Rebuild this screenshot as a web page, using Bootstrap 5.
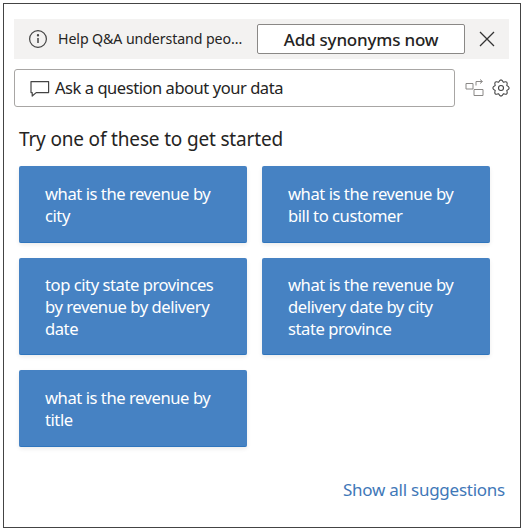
<!DOCTYPE html>
<html lang="en"><head><meta charset="utf-8"><title>Q&amp;A</title>
<link rel="stylesheet" href="https://cdn.jsdelivr.net/npm/bootstrap@5.3.0/dist/css/bootstrap.min.css">
<style>
html,body{height:100%}
body{background:#fff;font-family:"Noto Sans","Open Sans",sans-serif;color:#252423;padding:3px 1px 4px 3px}
.qa-frame{height:525px;border:1px solid #444;padding:15px 10px 0 10px}
.qa-banner{height:40px;background:#f3f2f1;padding:0 0 0 14px;margin-right:1px}
.qa-banner-text{font-size:14.2px;width:199px;margin-left:10px;white-space:nowrap;letter-spacing:-.1px}
.qa-add{width:208px;height:30px;border:1px solid #8a8886;border-radius:2px;background:#fff;font-size:17px;font-weight:500;padding:0;color:#252423;letter-spacing:-.2px;line-height:1}
.qa-x{width:44px}
.qa-row{margin-top:10px}
.qa-input{width:441px;height:38px;border:1px solid #a8a6a4;border-radius:3px;padding-left:15px;font-size:16.5px;letter-spacing:-.45px;gap:5px}
.qa-tools{gap:7px;margin-left:10px}
.qa-title{font-size:19px;margin:19px 0 14px 5px;line-height:26px;letter-spacing:-.17px}
.qa-grid{display:grid;grid-template-columns:228px 228px;column-gap:15px;row-gap:15px;margin-left:5px}
.qa-tile{background:#4682c3;border:0;border-bottom:1px solid #2f75bd;border-radius:2px;color:#fff;padding:17px 20px 0 26px;font-size:16.6px;line-height:22px;box-shadow:0 2px 4px rgba(0,0,0,.08);letter-spacing:-.45px}
.qa-h77{height:77px}.qa-h97{height:97px;padding-top:16px}
.qa-link{color:#3f78b8;font-size:17px;text-decoration:none;letter-spacing:-.25px}
.qa-foot{margin-top:30px;padding-right:5px}
</style></head><body>
<div class="qa-frame">
  <div class="qa-banner d-flex align-items-center">
    <svg width="20" height="20" viewBox="0 0 20 20" fill="none" stroke="#444" stroke-width="1.2"><circle cx="10" cy="10" r="8.4"/><path d="M10 9v5" stroke-width="1.5"/><circle cx="10" cy="6.3" r=".6" fill="#444"/></svg>
    <span class="qa-banner-text">Help Q&amp;A understand peo...</span>
    <button class="qa-add" type="button">Add synonyms now</button>
    <span class="qa-x d-flex justify-content-center"><svg width="16" height="16" viewBox="0 0 16 16" fill="none" stroke="#333" stroke-width="1.3"><path d="M1 1l14 14M15 1L1 15"/></svg></span>
  </div>
  <div class="qa-row d-flex align-items-center">
    <div class="qa-input d-flex align-items-center">
      <svg width="20" height="19" viewBox="0 0 20 19" fill="none" stroke="#444" stroke-width="1.2"><path d="M1 2.6h17.6v11H6.2L2.200 17v-3.400H1z" stroke-linejoin="round"/></svg>
      <span>Ask a question about your data</span>
    </div>
    <div class="qa-tools d-flex align-items-center">
      <svg width="20" height="20" viewBox="0 0 20 20" fill="none" stroke="#8a8886" stroke-width="1"><path d="M1 5.500h7V11H1zM9 11.500h9v6H9zM11 7.500v-4h6M15 1.500l2.500 2-2.500 2"/></svg>
      <svg width="18" height="18" viewBox="0 0 18 18" fill="none" stroke="#444" stroke-width="1.1"><circle cx="9" cy="9" r="2.500"/><path d="M14.820 6.590Q19.500 9 14.820 11.410Q16.420 16.420 11.410 14.820Q9 19.500 6.590 14.820Q1.580 16.420 3.180 11.410Q-1.500 9 3.180 6.590Q1.580 1.580 6.590 3.180Q9-1.500 11.410 3.180Q16.420 1.580 14.820 6.590Z"/></svg>
    </div>
  </div>
  <div class="qa-title">Try one of these to get started</div>
  <div class="qa-grid">
    <div class="qa-tile qa-h77">what is the revenue by city</div>
    <div class="qa-tile qa-h77">what is the revenue by bill to customer</div>
    <div class="qa-tile qa-h97">top city state provinces by revenue by delivery date</div>
    <div class="qa-tile qa-h97">what is the revenue by delivery date by city state province</div>
    <div class="qa-tile qa-h77">what is the revenue by title</div>
  </div>
  <div class="qa-foot text-end"><a class="qa-link" href="#">Show all suggestions</a></div>
</div>
<script src="https://cdn.jsdelivr.net/npm/bootstrap@5.3.0/dist/js/bootstrap.bundle.min.js"></script>
</body></html>
